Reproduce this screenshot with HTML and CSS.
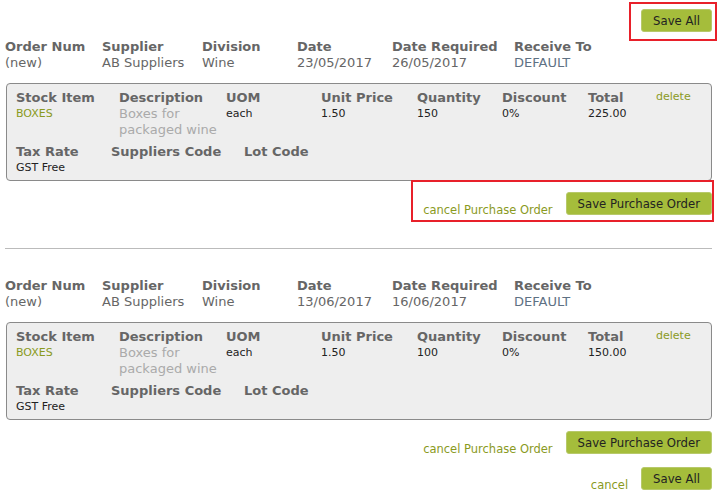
FILE: index.html
```html
<!DOCTYPE html>
<html lang="en">
<head>
  <meta charset="UTF-8">
  <title>Purchase Orders</title>
  <link rel="stylesheet" href="styles.css">
</head>
<body>
  <div class="top-bar">
    <span class="mark mark-top"></span>
    <button class="btn">Save All</button>
  </div>

  <div class="order">
    <div class="order-head">
      <div class="label">Order Num</div>
      <div class="label">Supplier</div>
      <div class="label">Division</div>
      <div class="label">Date</div>
      <div class="label">Date Required</div>
      <div class="label">Receive To</div>
      <div class="value">(new)</div>
      <div class="value">AB Suppliers</div>
      <div class="value">Wine</div>
      <div class="value">23/05/2017</div>
      <div class="value">26/05/2017</div>
      <div class="value receive">DEFAULT</div>
    </div>

    <div class="line-box">
      <div class="item-row">
        <div><div class="label">Stock Item</div><div class="small link">BOXES</div></div>
        <div><div class="label">Description</div><div class="desc">Boxes for packaged wine</div></div>
        <div><div class="label">UOM</div><div class="small">each</div></div>
        <div><div class="label">Unit Price</div><div class="small">1.50</div></div>
        <div><div class="label">Quantity</div><div class="small">150</div></div>
        <div><div class="label">Discount</div><div class="small">0%</div></div>
        <div><div class="label">Total</div><div class="small">225.00</div></div>
        <div><a class="delete" href="#">delete</a></div>
      </div>
      <div class="extra-row">
        <div><div class="label">Tax Rate</div><div class="small">GST Free</div></div>
        <div><div class="label">Suppliers Code</div></div>
        <div><div class="label">Lot Code</div></div>
      </div>
    </div>

    <div class="actions">
      <span class="mark mark-order"></span>
      <a class="cancel" href="#">cancel Purchase Order</a>
      <button class="btn">Save Purchase Order</button>
    </div>
  </div>

  <hr class="divider">

  <div class="order">
    <div class="order-head">
      <div class="label">Order Num</div>
      <div class="label">Supplier</div>
      <div class="label">Division</div>
      <div class="label">Date</div>
      <div class="label">Date Required</div>
      <div class="label">Receive To</div>
      <div class="value">(new)</div>
      <div class="value">AB Suppliers</div>
      <div class="value">Wine</div>
      <div class="value">13/06/2017</div>
      <div class="value">16/06/2017</div>
      <div class="value receive">DEFAULT</div>
    </div>

    <div class="line-box">
      <div class="item-row">
        <div><div class="label">Stock Item</div><div class="small link">BOXES</div></div>
        <div><div class="label">Description</div><div class="desc">Boxes for packaged wine</div></div>
        <div><div class="label">UOM</div><div class="small">each</div></div>
        <div><div class="label">Unit Price</div><div class="small">1.50</div></div>
        <div><div class="label">Quantity</div><div class="small">100</div></div>
        <div><div class="label">Discount</div><div class="small">0%</div></div>
        <div><div class="label">Total</div><div class="small">150.00</div></div>
        <div><a class="delete" href="#">delete</a></div>
      </div>
      <div class="extra-row">
        <div><div class="label">Tax Rate</div><div class="small">GST Free</div></div>
        <div><div class="label">Suppliers Code</div></div>
        <div><div class="label">Lot Code</div></div>
      </div>
    </div>

    <div class="actions">
      <a class="cancel" href="#">cancel Purchase Order</a>
      <button class="btn">Save Purchase Order</button>
    </div>
  </div>

  <div class="actions save-all">
    <a class="cancel" href="#">cancel</a>
    <button class="btn">Save All</button>
  </div>
</body>
</html>
```

FILE: styles.css
```css
body {
  font-family: "DejaVu Sans", Verdana, sans-serif;
  margin: 0;
  padding: 0 9px 0 5px;
  color: #666;
  background: #fff;
}

.top-bar {
  position: relative;
  display: flex;
  justify-content: flex-end;
  margin-top: 9px;
}

.btn {
  font-family: "DejaVu Sans", Verdana, sans-serif;
  font-size: 11.7px;
  color: #222;
  background-color: #a5bd3b;
  border: 1px solid #b7c96a;
  border-radius: 3px;
  height: 23px;
  padding: 0 11px;
  cursor: pointer;
}

.mark {
  position: absolute;
  border: 2px solid #e8202a;
  pointer-events: none;
}

.mark-top {
  top: -7px;
  right: -5px;
  width: 84px;
  height: 35px;
}

.mark-order {
  top: -12px;
  right: -2px;
  width: 299px;
  height: 38px;
}

.order-head {
  display: grid;
  grid-template-columns: 97px 100px 95px 95px 122px auto;
  margin-top: 7px;
}

.label {
  font-size: 13px;
  font-weight: bold;
  line-height: 16px;
  color: #666;
  white-space: nowrap;
}

.value {
  font-size: 13px;
  line-height: 16px;
  color: #666;
}

.value.receive {
  color: #5e7184;
}

.line-box {
  margin: 12px 0 0 1px;
  background: #eee;
  border: 1px solid #8a8a8a;
  border-radius: 4px;
  padding: 6px 0 5px 9px;
}

.item-row {
  display: grid;
  grid-template-columns: 103px 107px 95px 96px 85px 86px 68px auto;
}

.extra-row {
  display: grid;
  grid-template-columns: 95px 133px auto;
  margin-top: 6px;
}

.small {
  font-size: 11px;
  line-height: 15px;
  color: #222;
}

.small.link {
  color: #8a9a1e;
}

.desc {
  font-size: 13px;
  line-height: 16px;
  color: #aaa;
  width: 100px;
}

.delete {
  display: block;
  font-size: 11px;
  line-height: 13px;
  color: #8a9a1e;
  text-decoration: none;
}

.actions {
  position: relative;
  display: flex;
  justify-content: flex-end;
  align-items: flex-end;
  gap: 13px;
  margin-top: 11px;
}

.cancel {
  font-size: 11.5px;
  line-height: 15px;
  color: #8a9a1e;
  text-decoration: none;
  margin-bottom: -3px;
}

.divider {
  border: none;
  border-top: 1px solid #bbb;
  margin: 33px 0 29px 0;
}

.save-all {
  margin-top: 13px;
}
```
